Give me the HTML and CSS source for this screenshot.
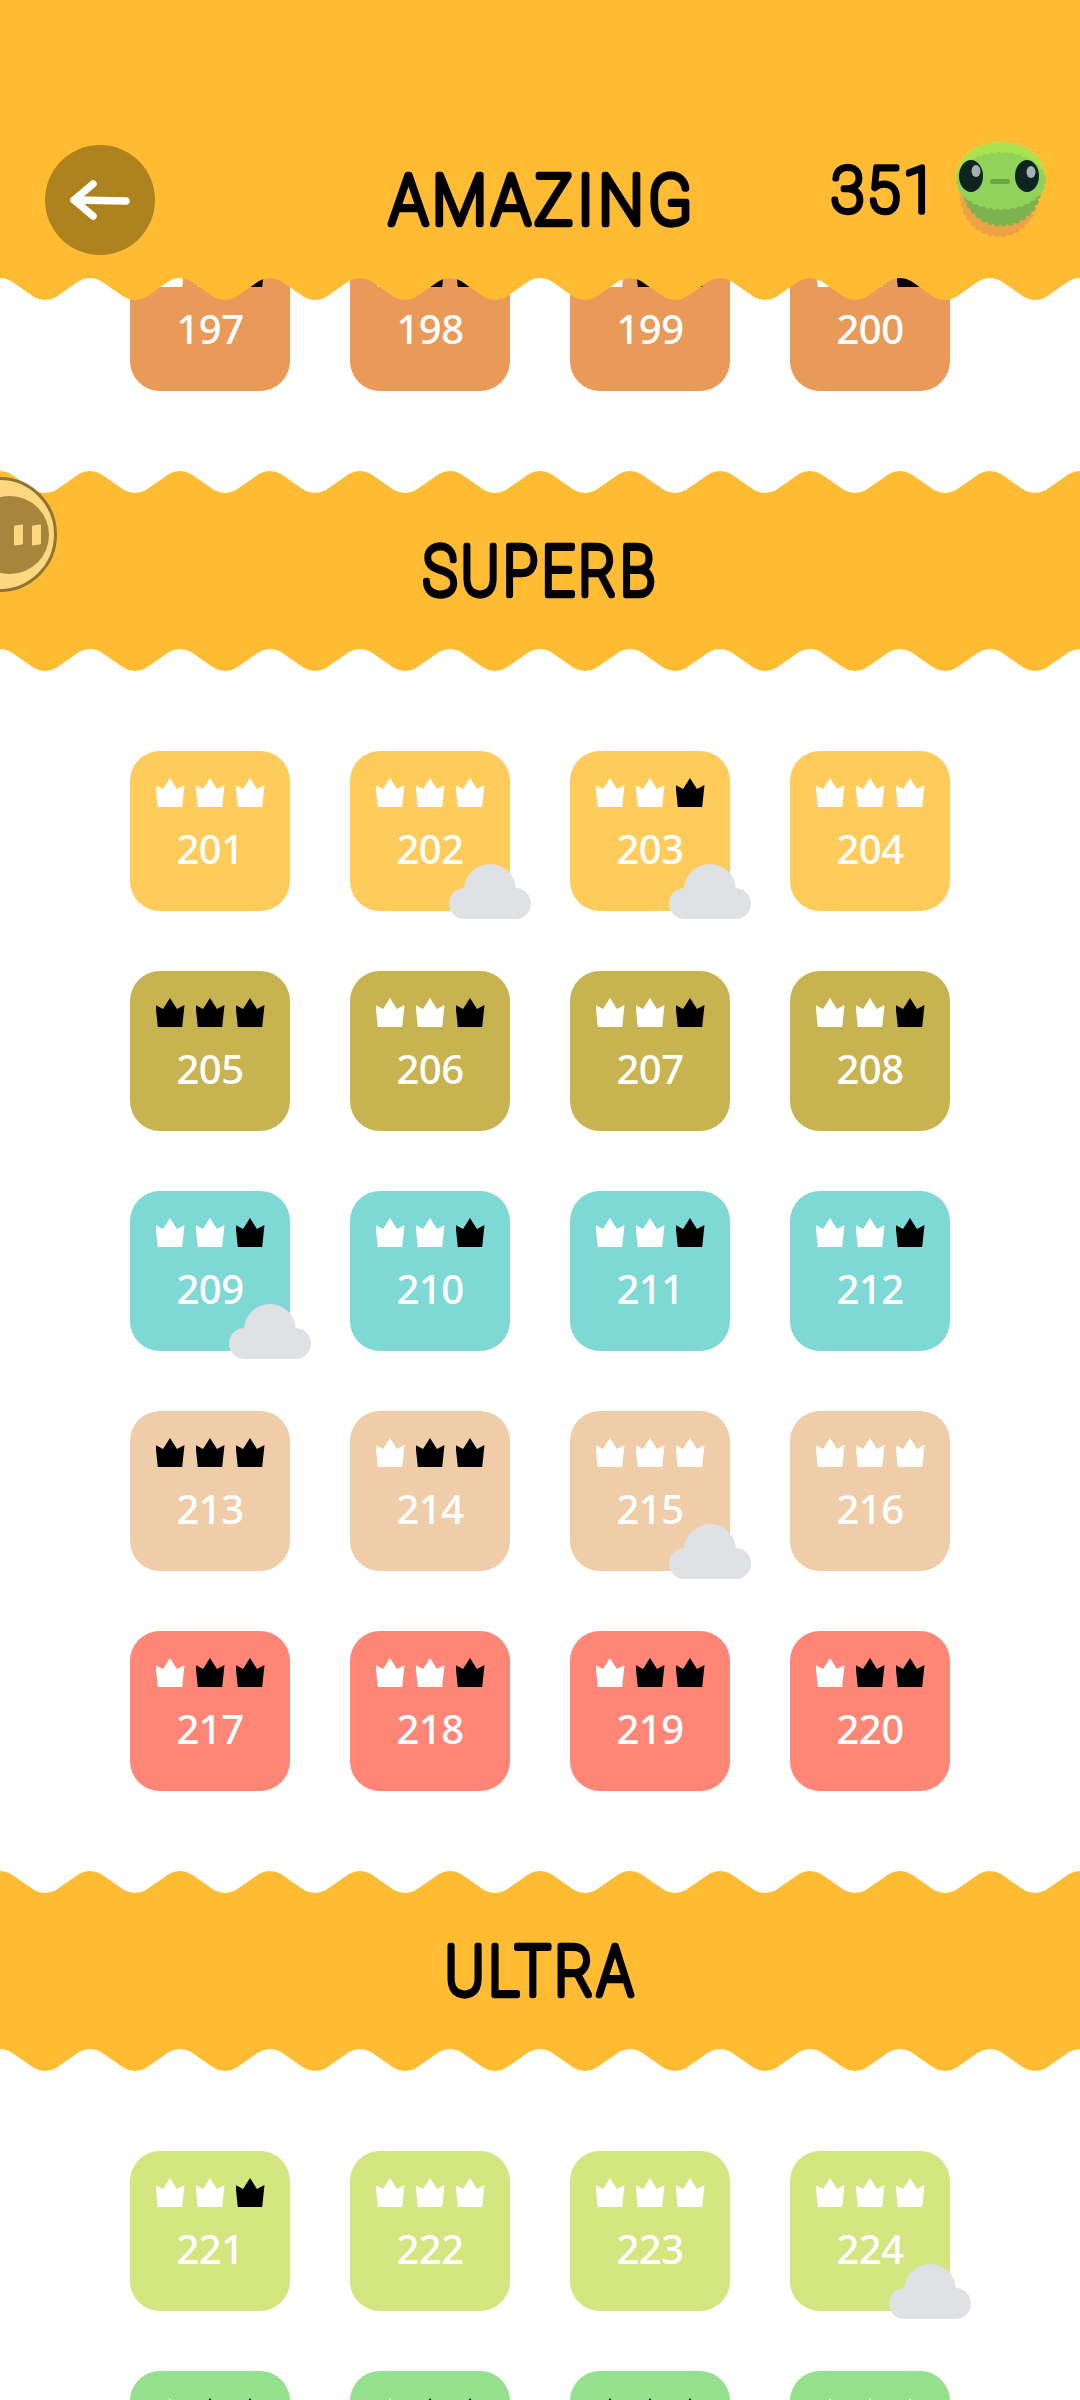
FILE: index.html
```html
<!DOCTYPE html>
<html lang="en">
<head>
  <meta charset="UTF-8" />
  <meta name="viewport" content="width=device-width, initial-scale=1" />
  <title>Levels</title>
  <link rel="stylesheet" href="styles.css">
</head>
<body>
  <svg class="defs" width="0" height="0">
    <defs>
      <pattern id="waveTop" width="90" height="22" patternUnits="userSpaceOnUse">
        <path d="M0 0q6 0 11 3l23 16q5 3 11 3q6 0 11-3l23-16q5-3 11-3V22H0Z" fill="#ffbc33" />
      </pattern>
      <pattern id="waveBottom" width="90" height="22" patternUnits="userSpaceOnUse">
        <path d="M0 0q6 0 11 3l23 16q5 3 11 3q6 0 11-3l23-16q5-3 11-3Z" fill="#ffbc33" />
      </pattern>
      <symbol id="cloud" viewBox="0 0 82 55">
        <circle cx="41" cy="26" r="26" />
        <rect x="0" y="24" width="82" height="31" rx="15.5" />
      </symbol>
    </defs>
  </svg>

  <div class="screen">
    <header class="topbar">
      <div class="topbar-main">
        <button class="back">
          <svg viewBox="0 0 110 110" width="110" height="110">
            <path d="M30 55L81 56M48 39L29 55L48 71" fill="none" stroke="#fff" stroke-width="7.5" stroke-linecap="round" stroke-linejoin="round" />
          </svg>
        </button>
        <svg class="headline" width="340" height="80"><text x="167" y="64" textLength="307" lengthAdjust="spacingAndGlyphs">AMAZING</text></svg>
        <div class="score">
          <svg class="score-num" width="120" height="70"><text x="54" y="52" textLength="108" lengthAdjust="spacingAndGlyphs">351</text></svg>
          <svg class="mascot" viewBox="0 0 96 100" width="96" height="100">
            <ellipse cx="45" cy="55" rx="38" ry="41" fill="#eda246" stroke="#eda246" stroke-width="3" stroke-dasharray="2 5" stroke-linecap="round" />
            <ellipse cx="48" cy="48" rx="38" ry="37" fill="#7cb34f" stroke="#7cb34f" stroke-width="3" stroke-dasharray="2 5" stroke-linecap="round" />
            <ellipse cx="47" cy="35" rx="43" ry="32" fill="#a9e24f" stroke="#a9e24f" stroke-width="3" stroke-dasharray="2 5" stroke-linecap="round" />
            <ellipse cx="47" cy="41" rx="44" ry="28" fill="#90d25a" stroke="#90d25a" stroke-width="2" stroke-dasharray="2 5" stroke-linecap="round" />
            <ellipse cx="17" cy="36" rx="12" ry="16" fill="#0f2420" />
            <ellipse cx="73" cy="36" rx="12" ry="16" fill="#0f2420" />
            <ellipse cx="22" cy="31" rx="4.5" ry="6" fill="#a6b2b0" />
            <ellipse cx="77" cy="32" rx="4.5" ry="6" fill="#a6b2b0" />
            <rect x="36" y="39" width="20" height="5" rx="2.5" fill="#6fa644" />
          </svg>
        </div>
      </div>
      <svg class="wave" width="1080" height="22"><rect width="1080" height="22" fill="url(#waveBottom)" /></svg>
    </header>

    <div class="pause">
      <div class="pause-inner"><span class="pause-bar"></span><span class="pause-bar"></span></div>
    </div>

    <main class="levels">
      <div class="grid grid-first">
        <div class="tile orange"><div class="crowns"><i class="crown"></i><i class="crown"></i><i class="crown dark"></i></div><div class="num">197</div></div>
        <div class="tile orange"><div class="crowns"><i class="crown"></i><i class="crown dark"></i><i class="crown dark"></i></div><div class="num">198</div></div>
        <div class="tile orange"><div class="crowns"><i class="crown"></i><i class="crown dark"></i><i class="crown dark"></i></div><div class="num">199</div></div>
        <div class="tile orange"><div class="crowns"><i class="crown"></i><i class="crown"></i><i class="crown dark"></i></div><div class="num">200</div></div>
      </div>

      <section class="band">
        <svg class="wave" width="1080" height="22"><rect width="1080" height="22" fill="url(#waveTop)" /></svg>
        <div class="band-mid"><svg class="headline" width="340" height="80"><text x="171" y="64" textLength="236" lengthAdjust="spacingAndGlyphs">SUPERB</text></svg></div>
        <svg class="wave" width="1080" height="22"><rect width="1080" height="22" fill="url(#waveBottom)" /></svg>
      </section>

      <div class="grid">
        <div class="tile yellow"><div class="crowns"><i class="crown"></i><i class="crown"></i><i class="crown"></i></div><div class="num">201</div></div>
        <div class="tile yellow"><div class="crowns"><i class="crown"></i><i class="crown"></i><i class="crown"></i></div><div class="num">202</div><svg class="cloud"><use href="#cloud" /></svg></div>
        <div class="tile yellow"><div class="crowns"><i class="crown"></i><i class="crown"></i><i class="crown dark"></i></div><div class="num">203</div><svg class="cloud"><use href="#cloud" /></svg></div>
        <div class="tile yellow"><div class="crowns"><i class="crown"></i><i class="crown"></i><i class="crown"></i></div><div class="num">204</div></div>

        <div class="tile olive"><div class="crowns"><i class="crown dark"></i><i class="crown dark"></i><i class="crown dark"></i></div><div class="num">205</div></div>
        <div class="tile olive"><div class="crowns"><i class="crown"></i><i class="crown"></i><i class="crown dark"></i></div><div class="num">206</div></div>
        <div class="tile olive"><div class="crowns"><i class="crown"></i><i class="crown"></i><i class="crown dark"></i></div><div class="num">207</div></div>
        <div class="tile olive"><div class="crowns"><i class="crown"></i><i class="crown"></i><i class="crown dark"></i></div><div class="num">208</div></div>

        <div class="tile teal"><div class="crowns"><i class="crown"></i><i class="crown"></i><i class="crown dark"></i></div><div class="num">209</div><svg class="cloud"><use href="#cloud" /></svg></div>
        <div class="tile teal"><div class="crowns"><i class="crown"></i><i class="crown"></i><i class="crown dark"></i></div><div class="num">210</div></div>
        <div class="tile teal"><div class="crowns"><i class="crown"></i><i class="crown"></i><i class="crown dark"></i></div><div class="num">211</div></div>
        <div class="tile teal"><div class="crowns"><i class="crown"></i><i class="crown"></i><i class="crown dark"></i></div><div class="num">212</div></div>

        <div class="tile sand"><div class="crowns"><i class="crown dark"></i><i class="crown dark"></i><i class="crown dark"></i></div><div class="num">213</div></div>
        <div class="tile sand"><div class="crowns"><i class="crown"></i><i class="crown dark"></i><i class="crown dark"></i></div><div class="num">214</div></div>
        <div class="tile sand"><div class="crowns"><i class="crown"></i><i class="crown"></i><i class="crown"></i></div><div class="num">215</div><svg class="cloud"><use href="#cloud" /></svg></div>
        <div class="tile sand"><div class="crowns"><i class="crown"></i><i class="crown"></i><i class="crown"></i></div><div class="num">216</div></div>

        <div class="tile coral"><div class="crowns"><i class="crown"></i><i class="crown dark"></i><i class="crown dark"></i></div><div class="num">217</div></div>
        <div class="tile coral"><div class="crowns"><i class="crown"></i><i class="crown"></i><i class="crown dark"></i></div><div class="num">218</div></div>
        <div class="tile coral"><div class="crowns"><i class="crown"></i><i class="crown dark"></i><i class="crown dark"></i></div><div class="num">219</div></div>
        <div class="tile coral"><div class="crowns"><i class="crown"></i><i class="crown dark"></i><i class="crown dark"></i></div><div class="num">220</div></div>
      </div>

      <section class="band">
        <svg class="wave" width="1080" height="22"><rect width="1080" height="22" fill="url(#waveTop)" /></svg>
        <div class="band-mid"><svg class="headline" width="340" height="80"><text x="171" y="64" textLength="192" lengthAdjust="spacingAndGlyphs">ULTRA</text></svg></div>
        <svg class="wave" width="1080" height="22"><rect width="1080" height="22" fill="url(#waveBottom)" /></svg>
      </section>

      <div class="grid">
        <div class="tile lime"><div class="crowns"><i class="crown"></i><i class="crown"></i><i class="crown dark"></i></div><div class="num">221</div></div>
        <div class="tile lime"><div class="crowns"><i class="crown"></i><i class="crown"></i><i class="crown"></i></div><div class="num">222</div></div>
        <div class="tile lime"><div class="crowns"><i class="crown"></i><i class="crown"></i><i class="crown"></i></div><div class="num">223</div></div>
        <div class="tile lime"><div class="crowns"><i class="crown"></i><i class="crown"></i><i class="crown"></i></div><div class="num">224</div><svg class="cloud"><use href="#cloud" /></svg></div>

        <div class="tile green"><div class="crowns"><i class="crown"></i><i class="crown dark"></i><i class="crown dark"></i></div><div class="num">225</div></div>
        <div class="tile green"><div class="crowns"><i class="crown"></i><i class="crown dark"></i><i class="crown dark"></i></div><div class="num">226</div></div>
        <div class="tile green"><div class="crowns"><i class="crown dark"></i><i class="crown dark"></i><i class="crown dark"></i></div><div class="num">227</div></div>
        <div class="tile green"><div class="crowns"><i class="crown"></i><i class="crown"></i><i class="crown"></i></div><div class="num">228</div></div>
      </div>
    </main>
  </div>
</body>
</html>
```

FILE: styles.css
```css
html, body { margin: 0; padding: 0; background: #fff; }
.defs { position: absolute; }
.screen { position: relative; width: 1080px; height: 2400px; overflow: hidden; font-family: "Noto Sans", sans-serif; }
.wave { display: block; }

/* big rounded labels: thin face plus a round stroke */
.headline { display: block; overflow: visible; }
.headline text, .score-num text { font-family: Roboto, sans-serif; font-weight: 100; text-anchor: middle; fill: #000; stroke: #000; stroke-linejoin: round; stroke-linecap: round; }
.headline text { font-size: 68px; letter-spacing: 5px; stroke-width: 6.5px; }
.score-num text { font-size: 63px; letter-spacing: 3px; stroke-width: 5.5px; }

/* header sits over the scrolled list */
.topbar { position: absolute; top: 0; left: 0; width: 1080px; z-index: 3; }
.topbar-main { height: 156px; padding: 122px 34px 0 45px; width: 1001px; background: #ffbc33; display: grid; grid-template-columns: 1fr auto 1fr; align-items: center; }
.back { width: 110px; height: 110px; border: 0; padding: 0; border-radius: 50%; background: #ae821f; }
.back svg { display: block; }
.score { display: flex; justify-content: flex-end; align-items: flex-start; gap: 3px; height: 100px; margin-top: -20px; }
.score-num { display: block; margin-top: 20px; overflow: visible; }
.mascot { display: block; margin-right: -4px; }

/* floating pause, half off the left edge */
.pause { position: absolute; left: -58px; top: 477px; width: 115px; height: 115px; box-sizing: border-box; border: 3px solid #8f7433; border-radius: 50%; background: #ffd77f; z-index: 2; display: flex; align-items: center; justify-content: flex-end; padding-right: 5px; }
.pause-inner { width: 78px; height: 78px; border-radius: 50%; background: #a6853d; display: flex; align-items: center; justify-content: center; gap: 9px; padding-left: 34px; box-sizing: border-box; }
.pause-bar { width: 9px; height: 20px; background: #ffd77f; transform: skewY(-8deg); border-radius: 1px; }

.levels { padding-top: 231px; }
.grid { display: grid; grid-template-columns: repeat(4, 160px); gap: 60px; padding: 80px 0 80px 130px; }
.grid-first { padding-top: 0; }

.band { height: 200px; display: flex; flex-direction: column; }
.band-mid { flex: 1; background: #ffbc33; display: flex; align-items: center; justify-content: center; }

.tile { position: relative; width: 160px; height: 160px; border-radius: 30px; color: #fff; box-sizing: border-box; padding-top: 27px; }
.orange { background: #ea9a58; }
.yellow { background: #ffcc5c; }
.olive { background: #c7b350; }
.teal { background: #7ed9d5; }
.sand { background: #efcda8; }
.coral { background: #ff8577; }
.lime { background: #d3e680; }
.green { background: #95e08c; }

.crowns { display: flex; justify-content: center; gap: 11px; }
.crown { display: block; width: 29px; height: 29px; background: #fff; clip-path: polygon(0 24%, 26% 38%, 50% 0, 74% 38%, 100% 24%, 92% 100%, 8% 100%); }
.crown.dark { background: #000; }
.num { margin-top: 22px; font-size: 40px; font-weight: 500; line-height: 40px; letter-spacing: -0.5px; text-align: center; }
.cloud { position: absolute; left: 99px; top: 113px; width: 82px; height: 55px; fill: #dfe1e4; }
```
